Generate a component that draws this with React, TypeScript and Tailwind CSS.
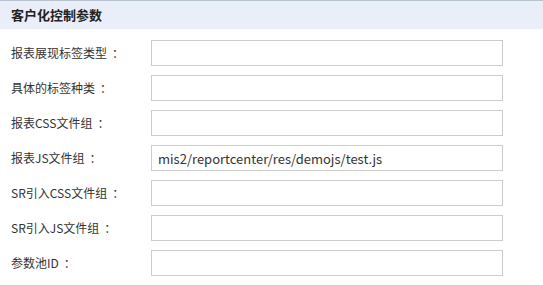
const rows = [
  { label: "报表展现标签类型", value: "" },
  { label: "具体的标签种类", value: "" },
  { label: "报表CSS文件组", value: "" },
  { label: "报表JS文件组", value: "mis2/reportcenter/res/demojs/test.js" },
  { label: "SR引入CSS文件组", value: "" },
  { label: "SR引入JS文件组", value: "" },
  { label: "参数池ID", value: "" },
];

export default function App() {
  return (
    <div
      className="w-[543px] h-[286px] bg-white text-[#333]"
      style={{ fontFamily: '"Microsoft YaHei", "Noto Sans CJK SC", sans-serif' }}
    >
      <div className="border-t border-[#b8c4d0] bg-[#e9eef8] h-[29px] flex items-center pl-[11px]">
        <span className="text-[13px] font-bold text-[#222]">客户化控制参数</span>
      </div>
      <div className="border-b border-[#c5d0d8] pt-[11px] pb-[9px]">
        {rows.map((row, idx) => (
          <div key={idx} className="flex items-center h-[26px] mb-[9px] last:mb-0">
            <div className="w-[151px] pl-[11px] text-[12px] flex items-center">
              <span>{row.label}</span>
              <span className="ml-[5px]">：</span>
            </div>
            <input
              className="w-[352px] h-[26px] border border-[#cccccc] px-[6px] text-[13px] text-[#333] outline-none"
              defaultValue={row.value}
            />
          </div>
        ))}
      </div>
    </div>
  );
}
